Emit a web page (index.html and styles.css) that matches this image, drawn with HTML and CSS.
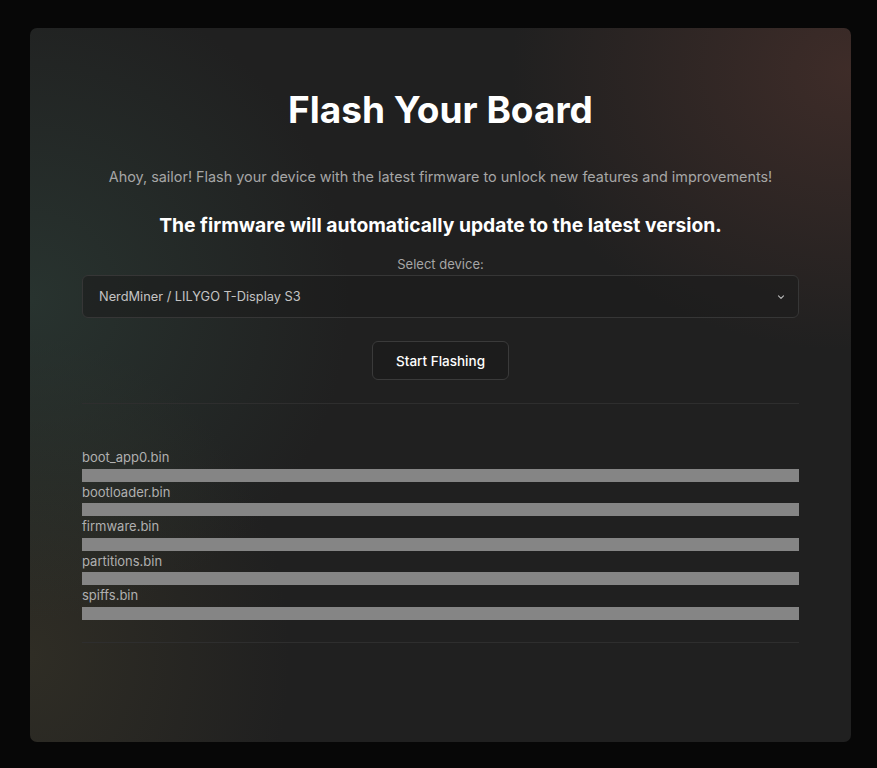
FILE: index.html
```html
<!DOCTYPE html>
<html lang="en">
<head>
<meta charset="utf-8">
<title>Flash Your Board</title>
<link rel="stylesheet" href="styles.css">
</head>
<body>
<main class="card">
  <h1 class="title">Flash Your Board</h1>
  <p class="intro">Ahoy, sailor! Flash your device with the latest firmware to unlock new features and improvements!</p>
  <p class="notice">The firmware will automatically update to the latest version.</p>
  <label class="select-label" for="device">Select device:</label>
  <div class="select">
    <span class="select-value">NerdMiner / LILYGO T-Display S3</span>
    <svg class="chevron" width="10" height="10" viewBox="0 0 10 10"><path d="M2.5 3.8 L5 6.3 L7.5 3.8" fill="none" stroke="#b5b5b5" stroke-width="1.2" stroke-linecap="round" stroke-linejoin="round"/></svg>
  </div>
  <div class="actions"><button class="btn">Start Flashing</button></div>
  <hr class="divider">
  <ul class="files">
    <li class="file"><span class="file-name">boot_app0.bin</span><div class="bar"></div></li>
    <li class="file"><span class="file-name">bootloader.bin</span><div class="bar"></div></li>
    <li class="file"><span class="file-name">firmware.bin</span><div class="bar"></div></li>
    <li class="file"><span class="file-name">partitions.bin</span><div class="bar"></div></li>
    <li class="file"><span class="file-name">spiffs.bin</span><div class="bar"></div></li>
  </ul>
  <hr class="divider bottom">
</main>
</body>
</html>
```
FILE: styles.css
```css
* { box-sizing: border-box; }
html, body { margin: 0; height: 100%; }
body {
  background: #070707;
  padding: 28px 26px 26px 30px;
  font-family: Inter, "Noto Sans", sans-serif;
  color: #fff;
}
.card {
  height: 714px;
  border-radius: 7px;
  padding: 60px 52px 0 52px;
  display: flex;
  flex-direction: column;
  background:
    radial-gradient(ellipse 340px 280px at 100% 6%, rgba(82,52,46,0.6), rgba(82,52,46,0) 100%),
    radial-gradient(ellipse 320px 320px at 0% 38%, rgba(48,70,62,0.5), rgba(48,70,62,0) 100%),
    radial-gradient(ellipse 260px 320px at 0% 88%, rgba(62,58,42,0.5), rgba(62,58,42,0) 100%),
    #202020;
}
.title {
  margin: 0;
  font-size: 37px;
  line-height: 44px;
  font-weight: 700;
  text-align: center;
}
.intro {
  margin: 35px 0 0;
  font-size: 14.4px;
  line-height: 20px;
  color: #a6a6a6;
  text-align: center;
}
.notice {
  margin: 25px 0 0;
  font-size: 19.3px;
  line-height: 26px;
  font-weight: 700;
  text-align: center;
}
.select-label {
  margin-top: 17px;
  font-size: 13px;
  line-height: 18px;
  color: #a6a6a6;
  text-align: center;
}
.select {
  margin-top: 2px;
  height: 43px;
  border: 1px solid #363636;
  border-radius: 6px;
  background: rgba(28,28,28,0.6);
  display: flex;
  align-items: center;
  justify-content: space-between;
  padding: 0 12px 0 16px;
}
.select-value {
  font-size: 12.8px;
  color: #c4c4c4;
}
.actions {
  margin-top: 23px;
  display: flex;
  justify-content: center;
}
.btn {
  width: 137px;
  height: 39px;
  border: 1px solid #3a3a3a;
  border-radius: 6px;
  background: #1c1c1c;
  color: #fff;
  font-family: Inter, "Noto Sans", sans-serif;
  font-size: 13.5px;
  font-weight: 500;
}
.divider {
  margin: 23px 0 0;
  border: 0;
  height: 1px;
  background: #2e2e2e;
}
.files {
  list-style: none;
  margin: 43px 0 0;
  padding: 0;
}
.file { display: flex; flex-direction: column; }
.file-name {
  font-size: 13px;
  line-height: 21.5px;
  color: #b0b0b0;
}
.bar {
  height: 13px;
  background: #858585;
}
.bottom { margin-top: 22px; }
```
